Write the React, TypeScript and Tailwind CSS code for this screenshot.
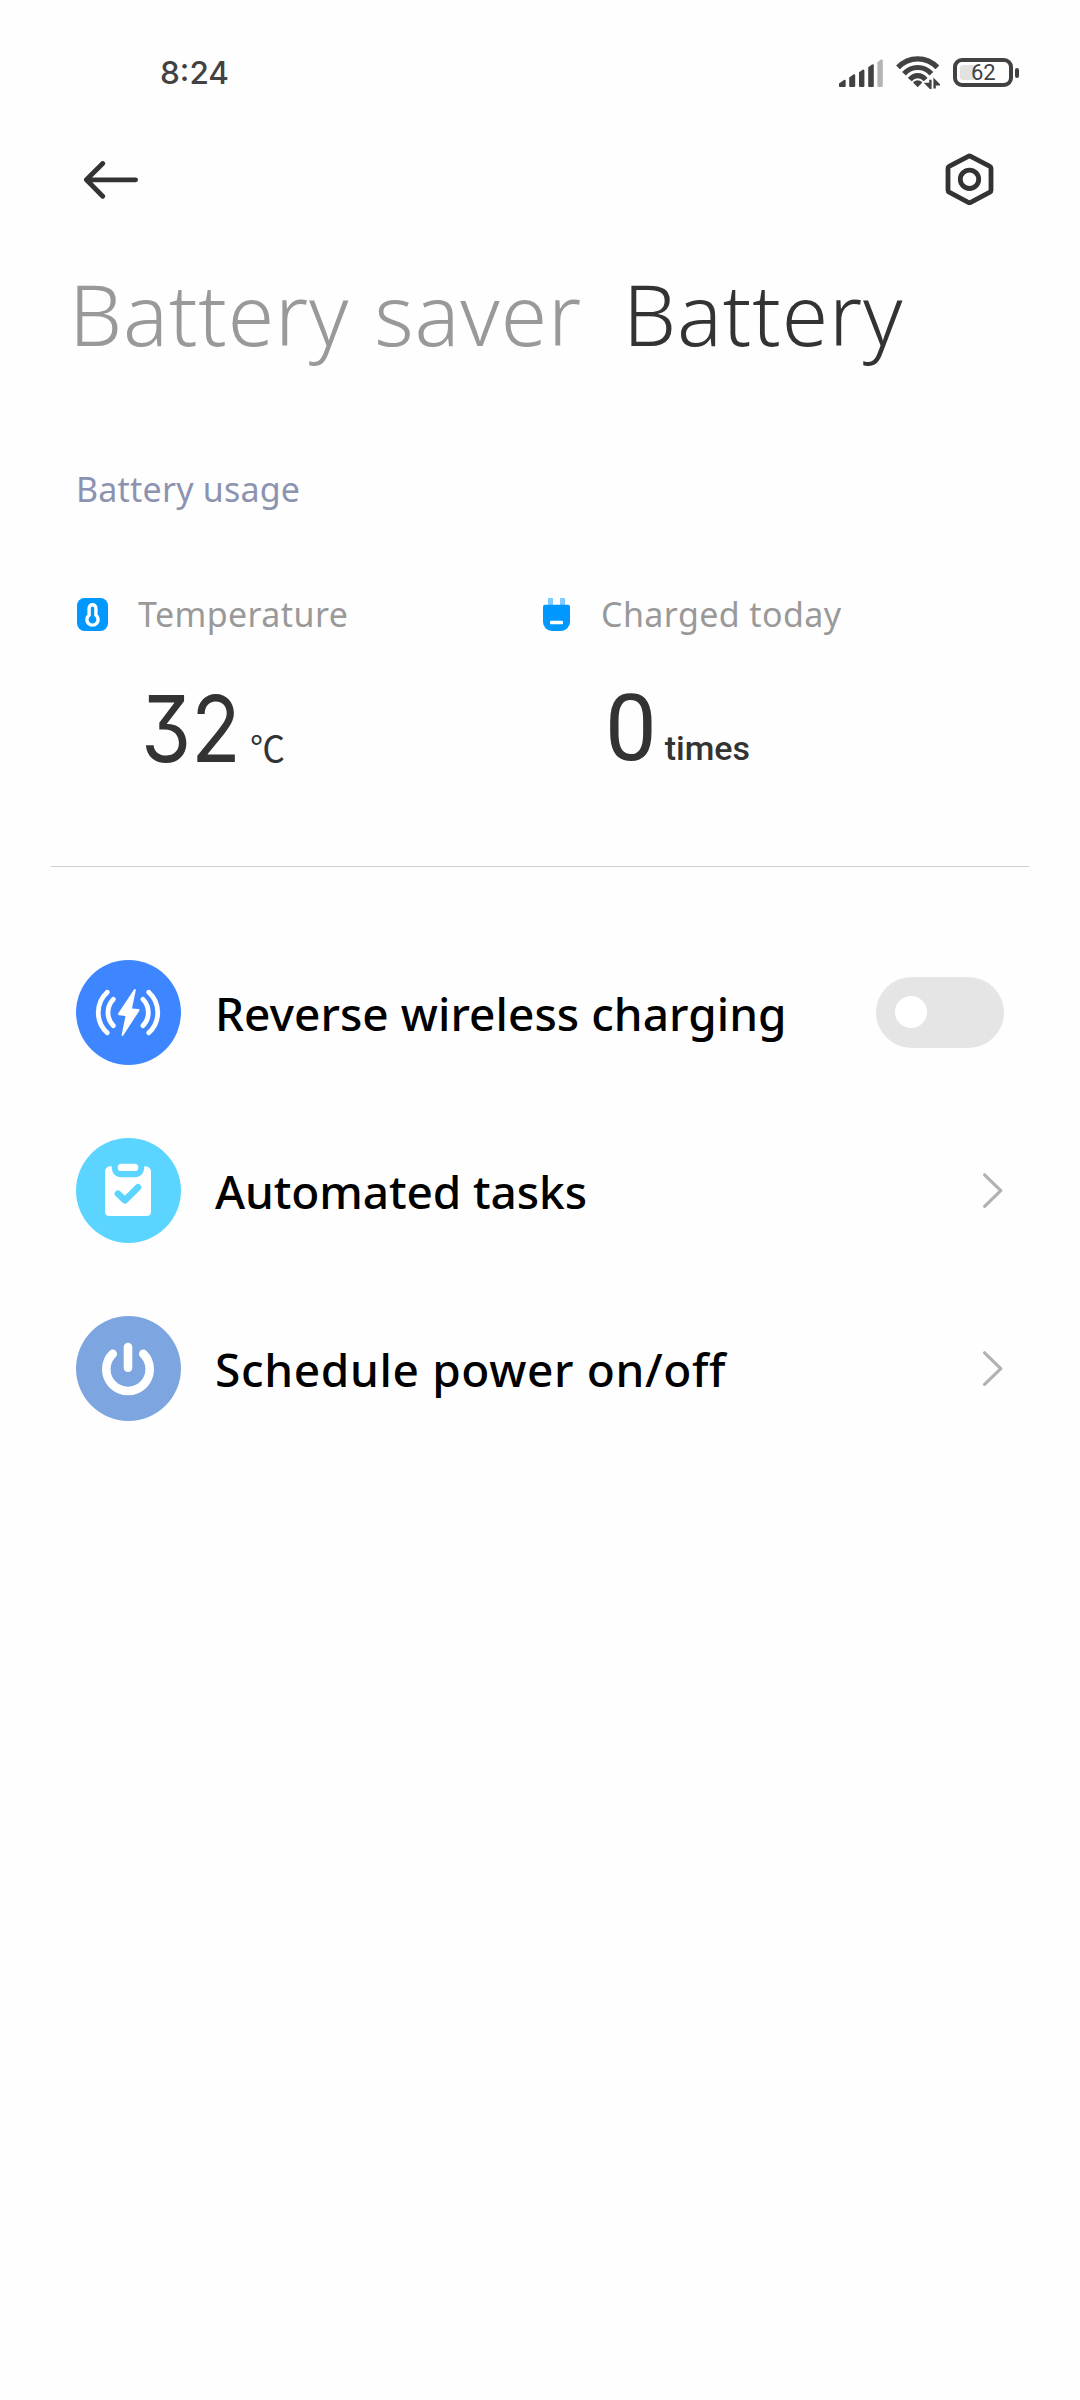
import type { ReactNode } from "react";

const tabs = [
  { title: "Battery saver", active: false },
  { title: "Battery", active: true },
];

const settings = [
  {
    id: "reverse",
    title: "Reverse wireless charging",
    tracking: "tracking-[0.05px]",
    icon: <WirelessIcon />,
    toggle: true,
  },
  {
    id: "tasks",
    title: "Automated tasks",
    tracking: "tracking-[-0.1px]",
    icon: <TasksIcon />,
    toggle: false,
  },
  {
    id: "schedule",
    title: "Schedule power on/off",
    tracking: "tracking-[0.65px]",
    icon: <PowerIcon />,
    toggle: false,
  },
];

function SignalIcon() {
  return (
    <svg width="44" height="30" viewBox="0 0 44 30" fill="#424242">
      <path d="M0 28V25.5L5 21.9Q6.7 21.2 6.7 23V28Q6.7 29 5.7 29H1Q0 29 0 28Z" />
      <path d="M10.2 28V19.4L14.4 16.6Q16.2 15.8 16.2 17.8V28Q16.2 29 15.2 29H11.2Q10.2 29 10.2 28Z" />
      <path d="M20 28V14.2L23.6 11.7Q25.4 10.9 25.4 12.9V28Q25.4 29 24.4 29H21Q20 29 20 28Z" />
      <path d="M29.2 28V9.2L33 6.6Q34.8 5.8 34.8 7.8V28Q34.8 29 33.8 29H30.2Q29.2 29 29.2 28Z" />
      <path
        d="M38.4 28V4.2L42 1.5Q43.8 0.7 43.8 2.7V28Q43.8 29 42.8 29H39.4Q38.4 29 38.4 28Z"
        fill="#b4b4b4"
      />
    </svg>
  );
}

function WifiIcon() {
  return (
    <svg width="44" height="33" viewBox="0 0 44 33" fill="none" stroke="#424242">
      <g strokeWidth="5.2">
        <path d="M2 11.4C13 0 30.4 0 41.4 11.4" />
        <path d="M8 17.8C15.6 9.4 27.8 9.4 35.4 17.8" />
        <path d="M13.8 23.6C18.4 18.4 25 18.4 29.6 23.6" />
      </g>
      <path
        d="M18 26.4Q21.7 23.6 25.4 26.4L21.7 30.2Z"
        fill="#424242"
        strokeWidth="1.4"
        strokeLinejoin="round"
      />
      <path d="M34.4 23.8V31.8L30.6 27.9H34.4" strokeWidth="2.4" />
      <path d="M38.6 32.4V24.4L42.4 28.3H38.6" strokeWidth="2.4" />
    </svg>
  );
}

function BatteryIcon() {
  return (
    <div className="flex items-center gap-[2px]">
      <div className="flex h-[29px] w-[60px] rounded-[9px] border-[4.5px] border-[#424242] p-[3px]">
        <div className="flex h-full w-4 items-center rounded-[3px] bg-[#e2e2e2] pl-[11px] font-['Roboto'] text-[22px] leading-none text-[#424242]">
          62
        </div>
      </div>
      <div className="h-[10px] w-1 rounded-full bg-[#424242]" />
    </div>
  );
}

function BackIcon() {
  return (
    <svg
      width="54"
      height="38"
      viewBox="0 0 54 38"
      fill="none"
      stroke="#333"
      strokeWidth="4.8"
      strokeLinecap="round"
      strokeLinejoin="round"
    >
      <path d="M18.7 2.5L2.4 18.8L18.7 35.2M2.4 18.8H51.6" />
    </svg>
  );
}

function HexagonIcon() {
  return (
    <svg
      width="49"
      height="53"
      viewBox="0 0 49 53"
      fill="none"
      stroke="#333"
      strokeWidth="4.8"
      strokeLinejoin="round"
    >
      <path d="M25.7 3.3L44.9 13.4Q46 14 46 15.3V37.3Q46 38.6 44.9 39.2L25.7 49.3Q24.5 49.9 23.3 49.3L4.1 39.2Q3 38.6 3 37.3V15.3Q3 14 4.1 13.4L23.3 3.3Q24.5 2.7 25.7 3.3Z" />
      <circle cx="24.5" cy="26.3" r="9.2" />
    </svg>
  );
}

function ThermometerIcon() {
  return (
    <svg width="33" height="33" viewBox="-1 0 33 33">
      <rect width="31" height="33" rx="7.5" fill="#0098ff" />
      <path
        d="M12.1 10.2a3.4 3.4 0 0 1 6.8 0v6.9a5.6 5.6 0 1 1-6.8 0Z"
        fill="none"
        stroke="#fff"
        strokeWidth="3.4"
      />
    </svg>
  );
}

function PlugIcon() {
  return (
    <svg width="33" height="33" viewBox="-4 0 33 33">
      <path d="M5 0h5v7H5ZM17 0h5v7h-5Z" fill="#80cbff" />
      <path
        d="M2 6.7H25Q27 6.7 27 8.7V24a9 9 0 0 1-9 9H9a9 9 0 0 1-9-9V8.7Q0 6.7 2 6.7Z"
        fill="#0098ff"
      />
      <rect x="7" y="22.8" width="13" height="3.5" rx="1" fill="#fff" />
    </svg>
  );
}

function WirelessIcon() {
  return (
    <svg width="105" height="105" viewBox="0 0 105 105">
      <circle cx="52.5" cy="52.5" r="52.5" fill="#3e86ff" />
      <path
        d="M58 29.5L42.3 53.2Q41.5 55 43.3 55.3L49.5 56L45.6 75Q46 76.6 47.2 75.4L63.2 51Q64 49.3 62.3 49L56 48.5L59.8 30.2Q59.4 28.4 58 29.5Z"
        fill="#fff"
      />
      <g fill="none" stroke="#fff" strokeWidth="4.8" strokeLinecap="round">
        <path d="M31.2 32.2A27.5 27.5 0 0 0 31.2 72.8" />
        <path d="M37.3 39.3A19 19 0 0 0 37.3 65.7" />
        <path d="M72.8 32.2A27.5 27.5 0 0 1 72.8 72.8" />
        <path d="M67 39.3A19 19 0 0 1 67 65.7" />
      </g>
    </svg>
  );
}

function TasksIcon() {
  return (
    <svg width="105" height="105" viewBox="0 0 105 105">
      <circle cx="52.5" cy="52.5" r="52.5" fill="#5bd4ff" />
      <path
        d="M35.7 28.2C35.7 35 39 39.2 45.5 39.2H58.5C65 39.2 68.3 35 68.3 28.2Q75 28.2 75 34V73.5Q75 78 70.5 78H33.5Q29 78 29 73.5V34Q29 28.2 35.7 28.2Z"
        fill="#fff"
      />
      <rect x="41.7" y="25.8" width="20.6" height="7.2" rx="3.6" fill="#fff" />
      <path
        d="M41.9 55.7L48.9 62.3L62 49.3"
        fill="none"
        stroke="#5bd4ff"
        strokeWidth="6.6"
        strokeLinecap="round"
        strokeLinejoin="round"
      />
    </svg>
  );
}

function PowerIcon() {
  return (
    <svg width="105" height="105" viewBox="0 0 105 105">
      <circle cx="52.5" cy="52.5" r="52.5" fill="#7da5df" />
      <g fill="none" stroke="#fff" strokeWidth="8.6" strokeLinecap="round">
        <path d="M36.7 37.9A21.7 21.7 0 1 0 67.3 37.9" />
        <path d="M52 31V51.7" />
      </g>
    </svg>
  );
}

function ChevronIcon() {
  return (
    <svg
      width="21"
      height="35"
      viewBox="0 0 21 35"
      fill="none"
      stroke="#b2b2b2"
      strokeWidth="3.2"
      strokeLinecap="round"
      strokeLinejoin="round"
    >
      <path d="M1.6 1.8L17.8 17.7L1.6 33.4" />
    </svg>
  );
}

function Toggle() {
  return (
    <button className="flex h-[71px] w-32 items-start rounded-full bg-[#e5e5e5] pt-[19px] pl-[19px]">
      <span className="size-8 rounded-full bg-white" />
    </button>
  );
}

function Stat({
  icon,
  label,
  children,
}: {
  icon: ReactNode;
  label: string;
  children: ReactNode;
}) {
  return (
    <div className="w-[463px]">
      <div className="flex h-10 items-center gap-[29px]">
        {icon}
        <span className="text-[34px] leading-none tracking-[0.4px] text-[#999]">
          {label}
        </span>
      </div>
      <div className="mt-[48.5px] flex h-[92px] items-baseline pl-[65px]">
        {children}
      </div>
    </div>
  );
}

export default function App() {
  return (
    <div className="flex min-h-[2400px] w-[1080px] flex-col bg-[#fefefe] font-['Noto_Sans',sans-serif] whitespace-nowrap text-[#333]">
      <div className="flex h-[95px] items-center justify-between pt-[50px] pr-[61px] pl-[160px]">
        <span className="font-['Inter'] text-[31.5px] leading-none font-medium text-[#424242]">
          8:24
        </span>
        <div className="flex items-center gap-[13px]">
          <SignalIcon />
          <WifiIcon />
          <BatteryIcon />
        </div>
      </div>

      <header className="flex h-[171px] items-center justify-between pr-[86px] pb-[2px] pl-[84px]">
        <BackIcon />
        <HexagonIcon />
      </header>

      <nav className="flex gap-[41px] pl-[69px] text-[84px] leading-[95px] font-light tracking-[0.9px] [word-spacing:2px]">
        {tabs.map((tab) => (
          <h1
            key={tab.title}
            className={tab.active ? "text-[#333]" : "text-[#999]"}
          >
            {tab.title}
          </h1>
        ))}
      </nav>

      <section className="mt-[107px] px-[76px]">
        <h2 className="h-10 pt-px text-[34px] leading-10 tracking-[0.2px] text-[#8c93b0]">
          Battery usage
        </h2>
        <div className="mt-[86px] flex">
          <Stat icon={<ThermometerIcon />} label="Temperature">
            <span className="w-[109px] origin-left scale-x-[0.88] font-['Inter'] text-[92px] leading-[92px] [font-feature-settings:'cv09']">
              32
            </span>
            <span className="font-['Noto_Sans_CJK_SC'] text-[35px] leading-none">
              ℃
            </span>
          </Stat>
          <Stat icon={<PlugIcon />} label="Charged today">
            <span className="ml-px font-['Roboto'] text-[92px] leading-[92px]">
              0
            </span>
            <span className="ml-2 font-['Roboto'] text-[34px] leading-none font-medium">
              times
            </span>
          </Stat>
        </div>
      </section>

      <hr className="mx-[51px] mt-[91.5px] h-px border-0 bg-[#cfcfcf]" />

      <ul className="pt-[56.5px]">
        {settings.map((item) => (
          <li key={item.id} className="flex h-[178px] items-center px-[76px]">
            {item.icon}
            <span
              className={`ml-[34px] flex-1 text-[46px] leading-none font-medium text-black ${item.tracking}`}
            >
              {item.title}
            </span>
            {item.toggle ? <Toggle /> : <ChevronIcon />}
          </li>
        ))}
      </ul>
    </div>
  );
}
